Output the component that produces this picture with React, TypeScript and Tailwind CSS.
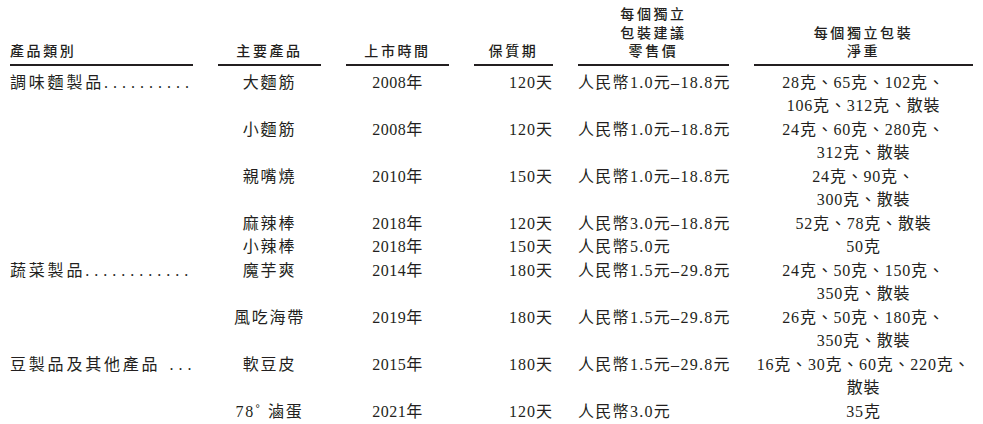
const body = "font-['Liberation_Serif','Noto_Sans_CJK_TC',serif]"

interface Row {
  category?: string
  dots?: string
  product: string
  year: string
  shelf: string
  price: string
  weight: string[]
}

const rows: Row[] = [
  { category: "調味麵製品", dots: "..........", product: "大麵筋", year: "2008年", shelf: "120天", price: "人民幣1.0元–18.8元", weight: ["28克、65克、102克、", "106克、312克、散裝"] },
  { product: "小麵筋", year: "2008年", shelf: "120天", price: "人民幣1.0元–18.8元", weight: ["24克、60克、280克、", "312克、散裝"] },
  { product: "親嘴燒", year: "2010年", shelf: "150天", price: "人民幣1.0元–18.8元", weight: ["24克、90克、", "300克、散裝"] },
  { product: "麻辣棒", year: "2018年", shelf: "120天", price: "人民幣3.0元–18.8元", weight: ["52克、78克、散裝"] },
  { product: "小辣棒", year: "2018年", shelf: "150天", price: "人民幣5.0元", weight: ["50克"] },
  { category: "蔬菜製品", dots: "............", product: "魔芋爽", year: "2014年", shelf: "180天", price: "人民幣1.5元–29.8元", weight: ["24克、50克、150克、", "350克、散裝"] },
  { product: "風吃海帶", year: "2019年", shelf: "180天", price: "人民幣1.5元–29.8元", weight: ["26克、50克、180克、", "350克、散裝"] },
  { category: "豆製品及其他產品", dots: " ...", product: "軟豆皮", year: "2015年", shelf: "180天", price: "人民幣1.5元–29.8元", weight: ["16克、30克、60克、220克、", "散裝"] },
  { product: "78˚ 滷蛋", year: "2021年", shelf: "120天", price: "人民幣3.0元", weight: ["35克"] },
]

function HeadCell({ lines, align = "center" }: { lines: string[]; align?: "left" | "center" | "right" }) {
  const a = align === "left" ? "text-left" : align === "right" ? "text-right" : "text-center"
  return (
    <div className={`border-b-2 border-[#231f20] pb-[4px] ${a}`}>
      {lines.map((l) => (
        <div key={l} className="leading-[18.5px]">{l}</div>
      ))}
    </div>
  )
}

export default function App() {
  return (
    <div className="w-[983px] h-[424px] bg-white text-[#231f20] overflow-hidden pt-[4px] px-[10px]">
      <div className="grid grid-cols-[183px_103px_103px_79px_151px_219px] gap-x-[25px]">
        <div className="contents font-['Noto_Sans_CJK_TC',sans-serif] text-[14px] tracking-[2.6px] font-medium">
          <div className="self-end"><HeadCell lines={["產品類別"]} align="left" /></div>
          <div className="self-end"><HeadCell lines={["主要產品"]} /></div>
          <div className="self-end"><HeadCell lines={["上市時間"]} /></div>
          <div className="self-end"><HeadCell lines={["保質期"]} /></div>
          <div className="self-end"><HeadCell lines={["每個獨立", "包裝建議", "零售價"]} /></div>
          <div className="self-end"><HeadCell lines={["每個獨立包裝", "淨重"]} /></div>
        </div>

        <div className="col-span-6 h-[5px]" />

        {rows.map((r, i) => (
          <div key={i} className={`contents ${body} text-[16px] leading-[23.5px]`}>
            <div className="tracking-[2.8px] whitespace-nowrap">
              {r.category}
              {r.dots && <span className="tracking-[5px]">{r.dots}</span>}
            </div>
            <div className="text-center tracking-[1.8px] whitespace-nowrap">{r.product}</div>
            <div className="text-center tracking-[0.5px]">{r.year}</div>
            <div className="text-right tracking-[1px]">{r.shelf}</div>
            <div className="tracking-[1.3px] whitespace-nowrap">{r.price}</div>
            <div className="text-center tracking-[0.8px] whitespace-nowrap">
              {r.weight.map((w) => (
                <div key={w}>{w}</div>
              ))}
            </div>
          </div>
        ))}
      </div>
    </div>
  )
}
